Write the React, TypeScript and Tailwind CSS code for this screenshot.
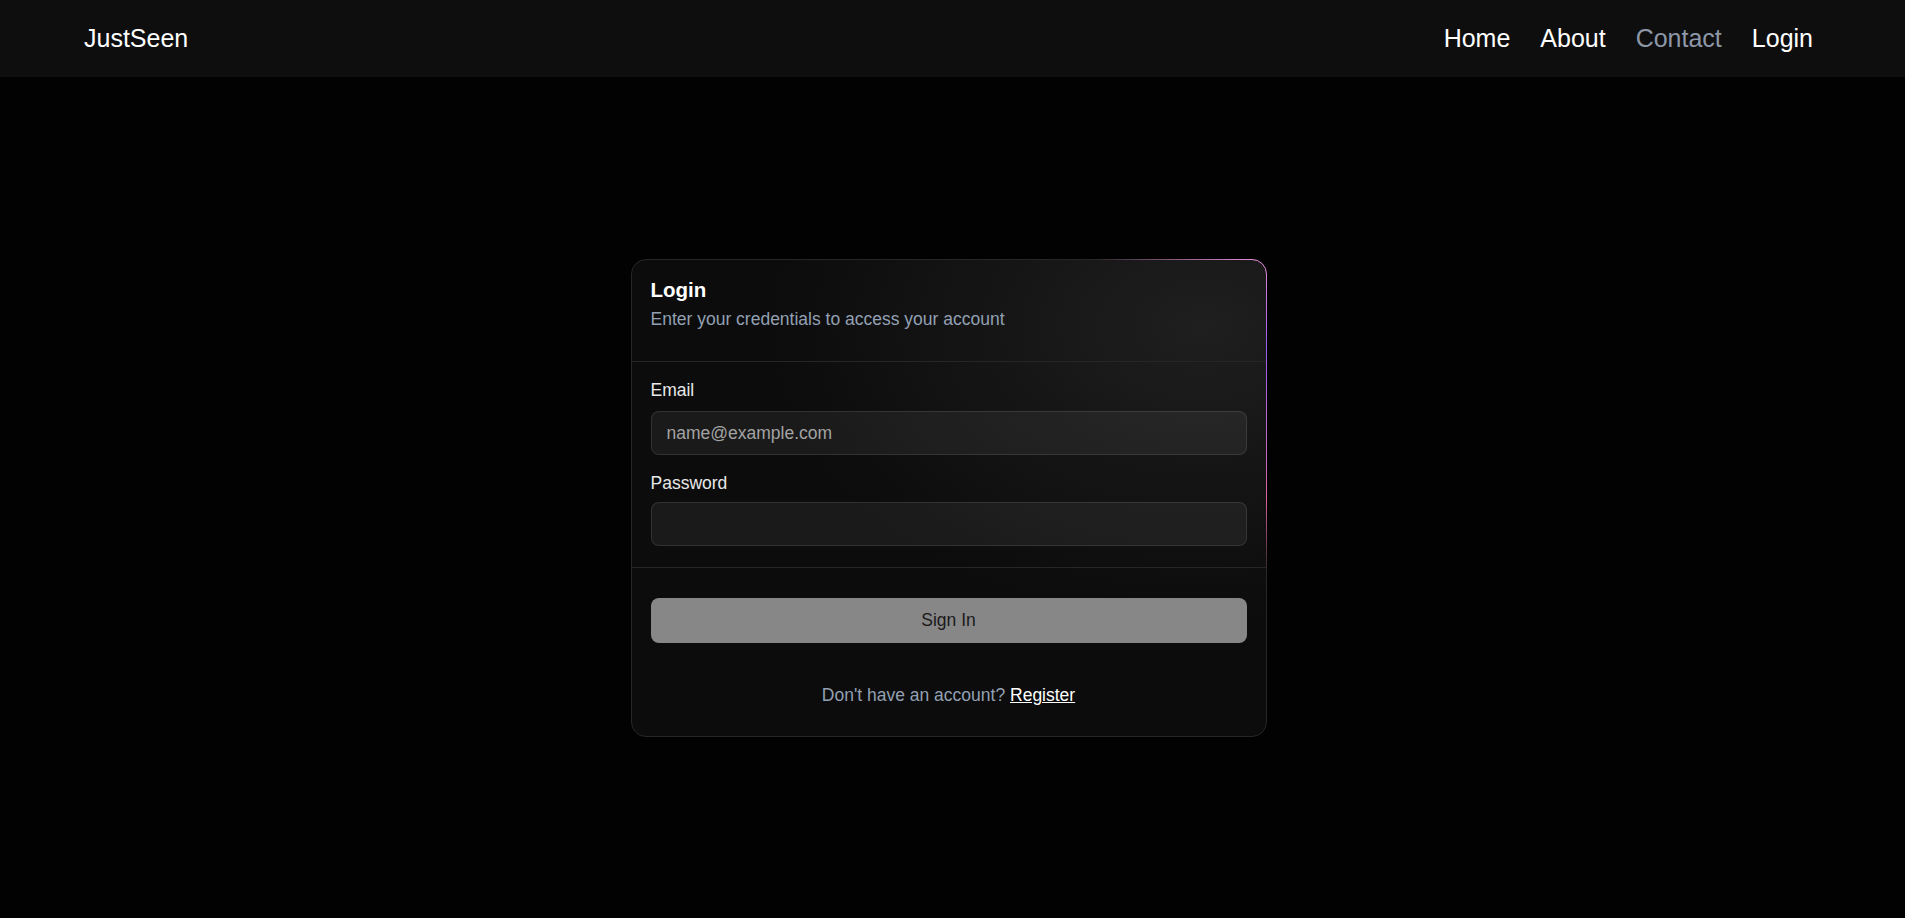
import React from "react";

function BorderBeam() {
  return (
    <svg
      className="pointer-events-none absolute -inset-px"
      width="636"
      height="478"
      viewBox="0 0 636 478"
      fill="none"
    >
      <defs>
        <linearGradient id="beamTop" gradientUnits="userSpaceOnUse" x1="460" y1="0" x2="621" y2="0">
          <stop offset="0" stopColor="#e48ad6" stopOpacity="0" />
          <stop offset="1" stopColor="#e48ad6" stopOpacity="1" />
        </linearGradient>
        <linearGradient id="beamRight" gradientUnits="userSpaceOnUse" x1="0" y1="0" x2="0" y2="315">
          <stop offset="0" stopColor="#e48ad6" />
          <stop offset="0.28" stopColor="#9a5cf2" />
          <stop offset="0.5" stopColor="#b268d6" />
          <stop offset="0.76" stopColor="#e0639f" />
          <stop offset="1" stopColor="#e0639f" stopOpacity="0" />
        </linearGradient>
      </defs>
      <path d="M460 0.5 H621" stroke="url(#beamTop)" strokeWidth="1" />
      <path d="M621 0.5 A14.5 14.5 0 0 1 635.5 15 V315" stroke="url(#beamRight)" strokeWidth="1" />
    </svg>
  );
}

export default function App() {
  return (
    <div className="min-h-screen bg-[#020202] font-['Liberation_Sans',Arial,sans-serif] flex flex-col">
      <nav className="h-[77px] shrink-0 bg-[#0e0e0e] flex items-center justify-between pl-[84px] pr-[92px]">
        <span className="text-[25px] leading-none text-white">JustSeen</span>
        <div className="flex items-center gap-[30px] text-[25px] leading-none">
          <a className="text-white">Home</a>
          <a className="text-white">About</a>
          <a className="text-[#8d97a7]">Contact</a>
          <a className="text-white">Login</a>
        </div>
      </nav>

      <main className="flex-1 flex items-center justify-center pr-[8px] pt-[1px]">
        <div className="relative w-[636px] rounded-[15px] border border-[#262626] bg-[#0c0c0c] bg-[radial-gradient(ellipse_430px_290px_at_90%_14%,#1f1f1f_0%,#151515_50%,#0c0c0c_100%)]">
          <BorderBeam />
          <div className="px-[19px] pt-[16px] pb-[30px] border-b border-[#262626]">
            <h1 className="text-[20.5px] leading-[28px] font-bold text-white">Login</h1>
            <p className="mt-[3px] text-[17.5px] leading-[24px] text-[#93a0b3]">
              Enter your credentials to access your account
            </p>
          </div>

          <div className="px-[19px] pt-[16px] pb-[21px] border-b border-[#262626]">
            <label className="block text-[17.5px] leading-[24px] text-[#e8e8e8]">Email</label>
            <input
              type="email"
              placeholder="name@example.com"
              className="mt-[9px] block w-full h-[44px] rounded-[8px] border border-white/10 bg-white/[0.06] px-[15px] text-[17.5px] text-white placeholder:text-[#a3a3a3] outline-none"
            />
            <label className="mt-[16px] block text-[17.5px] leading-[24px] text-[#e8e8e8]">Password</label>
            <input
              type="password"
              className="mt-[7px] block w-full h-[44px] rounded-[8px] border border-white/10 bg-white/[0.06] px-[15px] text-[17.5px] text-white outline-none"
            />
          </div>

          <div className="px-[19px] pt-[30px] pb-[28px]">
            <button className="w-full h-[45px] rounded-[8px] bg-[#878787] text-[17.5px] text-[#1a1a1a]">
              Sign In
            </button>
            <p className="mt-[39px] text-center text-[17.5px] leading-[26px] text-[#93a0b3]">
              Don't have an account? <a className="text-white underline">Register</a>
            </p>
          </div>
        </div>
      </main>
    </div>
  );
}
